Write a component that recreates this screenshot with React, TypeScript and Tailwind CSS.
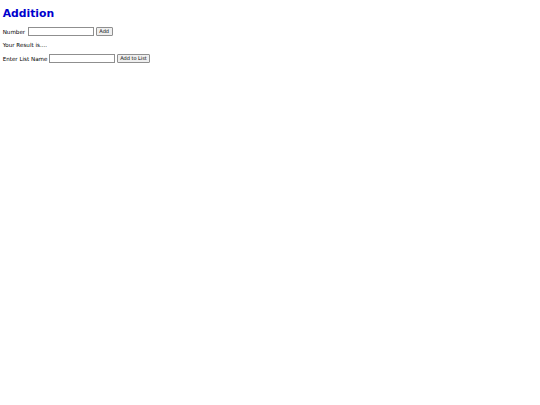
export default function App() {
  return (
    <div className="min-h-[405px] bg-white px-[2.67px] pt-[7.5px] text-[5.6px] leading-[6.5px] text-black [font-family:'DejaVu_Sans',sans-serif]">
      <h1 className="mb-[7.2px] text-[10.8px] font-bold leading-[12.6px] text-[#0000cd]">
        Addition
      </h1>

      <div className="flex items-center">
        <span>Number</span>
        <input
          type="text"
          className="ml-[2.5px] h-[9px] w-[66px] border border-[#8f8f8f] bg-white px-[1px] text-[5px] outline-none"
        />
        <button className="ml-[2px] flex h-[9px] w-[17px] items-center justify-center rounded-[1px] border border-[#8f8f8f] bg-[#efefef] text-[5px] leading-none">
          Add
        </button>
      </div>

      <p className="my-[5.8px]">Your Result is....</p>

      <div className="flex items-center">
        <span>Enter List Name</span>
        <input
          type="text"
          className="ml-[1.5px] h-[9px] w-[66px] border border-[#8f8f8f] bg-white px-[1px] text-[5px] outline-none"
        />
        <button className="ml-[2px] flex h-[9px] w-[33px] items-center justify-center rounded-[1px] border border-[#8f8f8f] bg-[#efefef] text-[5px] leading-none">
          Add to List
        </button>
      </div>
    </div>
  );
}
